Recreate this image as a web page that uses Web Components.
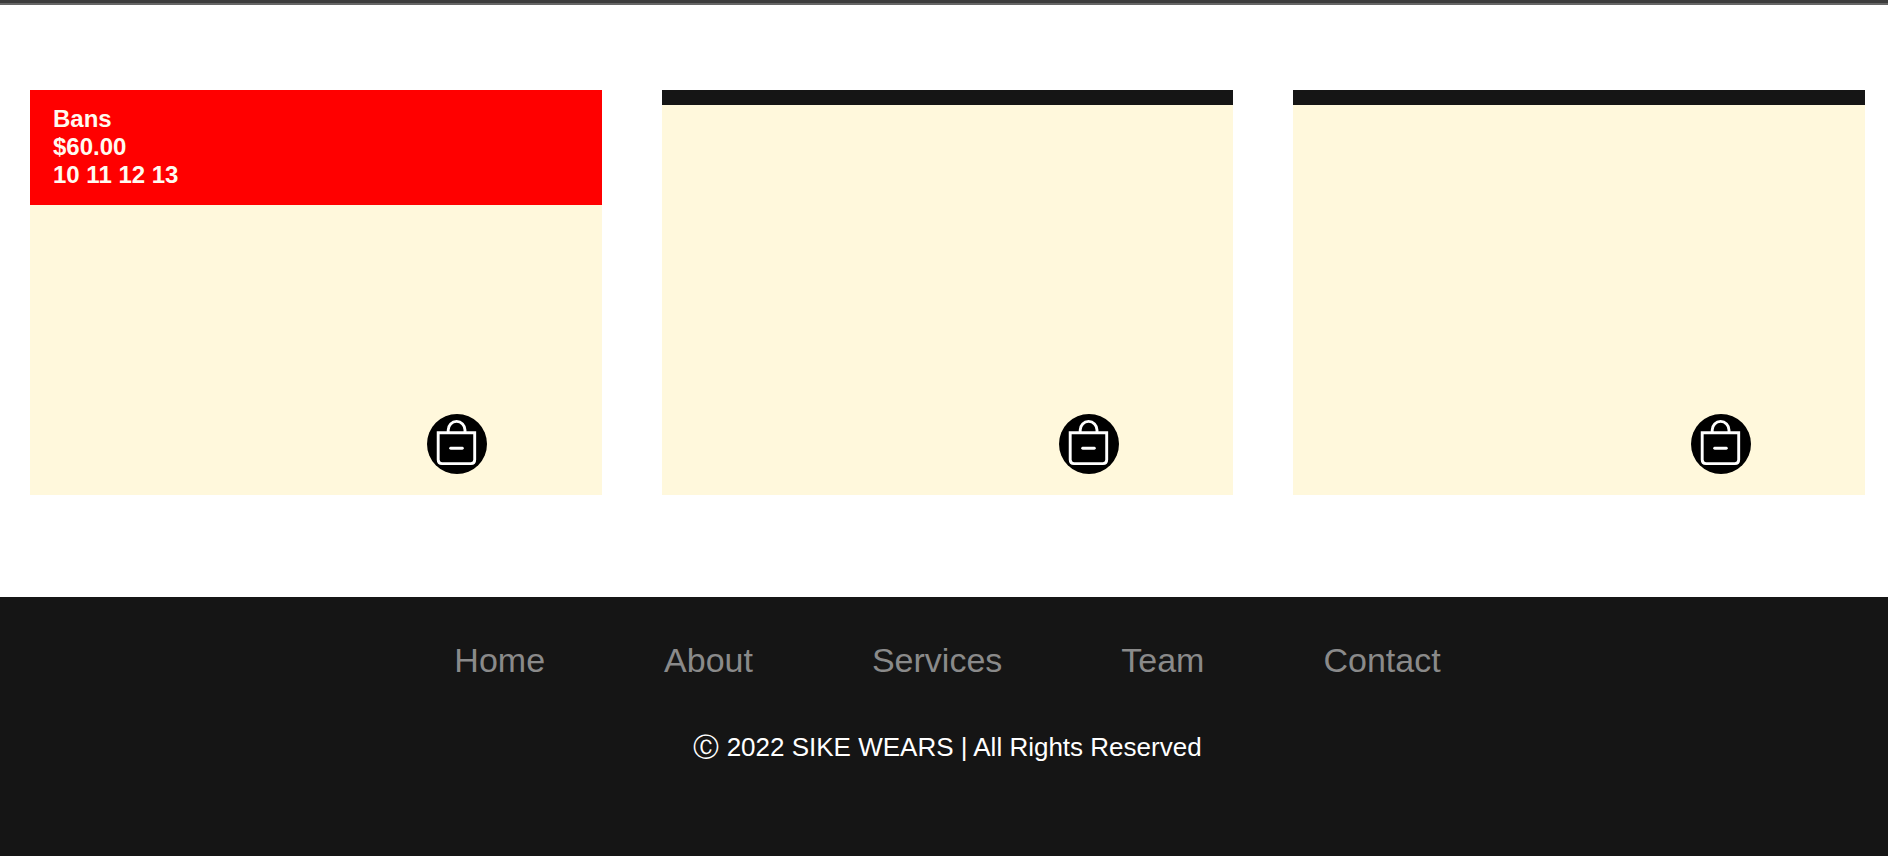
<!DOCTYPE html>
<html lang="en">
<head>
<meta charset="utf-8">
<title>SIKE WEARS</title>
<style>
  html { overflow-x: hidden; background: #151515; }
  body { margin: 0; background: #fff; font-family: "Liberation Sans", Arial, sans-serif; }
</style>
</head>
<body>
<sike-page>
  <product-card sale>
    <span slot="name">Bans</span>
    <span slot="price">$60.00</span>
    <span slot="sizes">10 11 12 13</span>
  </product-card>
  <product-card></product-card>
  <product-card></product-card>
  <site-footer slot="footer">
    <a href="#home">Home</a>
    <a href="#about">About</a>
    <a href="#services">Services</a>
    <a href="#team">Team</a>
    <a href="#contact">Contact</a>
    <span slot="legal">Ⓒ 2022 SIKE WEARS | All Rights Reserved</span>
  </site-footer>
</sike-page>
<script>
class Base extends HTMLElement {
  constructor() {
    super();
    this.attachShadow({ mode: 'open' }).innerHTML = this.constructor.markup;
  }
}

class SikePage extends Base {
  static markup = `
    <style>
      :host { display: flex; flex-direction: column; min-height: 100vh; }
      .rule { height: 3px; background: #3c3c3c; border-bottom: 2px solid #666; }
      main { display: grid; grid-template-columns: repeat(3, minmax(0, 1fr)); gap: 60px; padding: 85px 23px 102px 30px; }
      ::slotted(site-footer) { flex: 1; }
    </style>
    <div class="rule"></div>
    <main><slot></slot></main>
    <slot name="footer"></slot>`;
}

class BagButton extends Base {
  static markup = `
    <style>
      :host { display: block; }
      button { display: block; width: 60px; height: 60px; padding: 0; border: 0; border-radius: 50%; background: #000; cursor: pointer; }
      svg { display: block; }
    </style>
    <button type="button" aria-label="Remove from bag">
      <svg width="60" height="60" viewBox="0 0 60 60" fill="none" stroke="#fff" stroke-width="2.9">
        <path d="M11.2 18.8H47.7V45.8Q47.7 49.6 43.9 49.6H15Q11.2 49.6 11.2 45.8Z"/>
        <path d="M21.2 18.8V16A8.4 8.6 0 0 1 38 16V18.8"/>
        <path d="M23.7 34.2H35.3" stroke-linecap="round"/>
      </svg>
    </button>`;
}

class ProductCard extends Base {
  static markup = `
    <style>
      :host { display: flex; flex-direction: column; justify-content: space-between; min-height: 405px; background: #fff6dc; background: cornsilk; }
      header { display: flex; flex-direction: column; padding: 15px 0 0 23px; background: #151515; color: #fffaf0; font-size: 24px; font-weight: bold; line-height: 28px; }
      :host([sale]) header { padding-bottom: 16px; background: #f00; }
      bag-button { align-self: flex-end; margin: 0 20% 21px 0; }
    </style>
    <header>
      <slot name="name"></slot>
      <slot name="price"></slot>
      <slot name="sizes"></slot>
    </header>
    <bag-button></bag-button>`;
}

class SiteFooter extends Base {
  static markup = `
    <style>
      :host { display: block; box-sizing: border-box; padding: 43px 0 0 7px; background: #151515; color: #fff; text-align: center; }
      nav { display: flex; justify-content: center; gap: 119px; font-size: 34px; line-height: 40px; }
      ::slotted(a) { color: #8a8a8a; text-decoration: none; }
      p { margin: 52px 0 0; font-size: 26px; line-height: 30px; }
    </style>
    <nav aria-label="Footer"><slot></slot></nav>
    <p><slot name="legal"></slot></p>`;
}

customElements.define('bag-button', BagButton);
customElements.define('product-card', ProductCard);
customElements.define('site-footer', SiteFooter);
customElements.define('sike-page', SikePage);
</script>
</body>
</html>
